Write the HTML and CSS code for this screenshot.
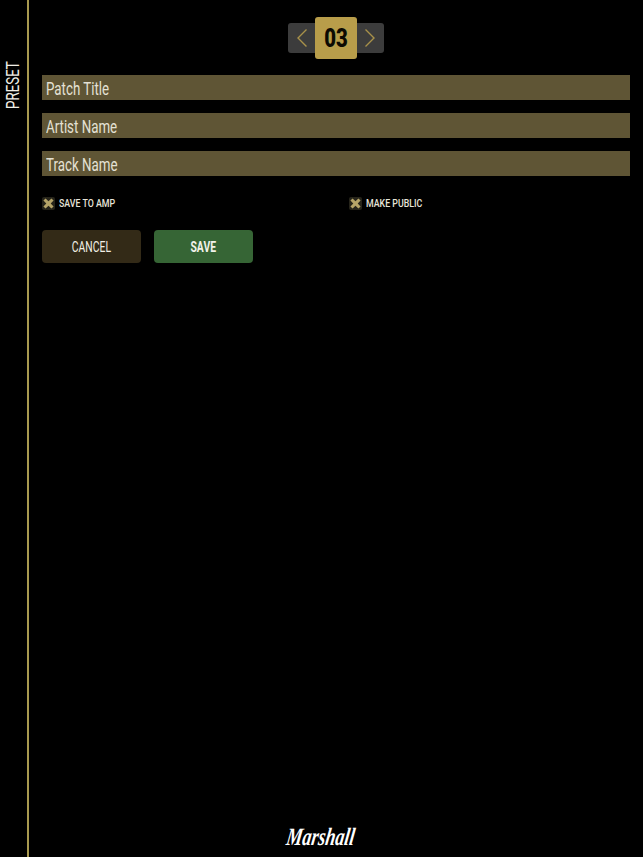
FILE: index.html
```html
<!DOCTYPE html>
<html>
  <head>
    <title>Preset</title>
    <meta name="viewport" content="width=device-width, initial-scale=1.0" />
    <link rel="stylesheet" href="styles.css">
  </head>
  <body>
    <div class="container">
      <!-- Side tab -->
      <div class="side-tab">
        <span class="side-tab-label">PRESET</span>
      </div>

      <div class="screen">
        <!-- Preset number -->
        <div class="stepper">
          <button class="step-button">
            <svg width="12" height="20" viewBox="0 0 12 20" fill="none" xmlns="http://www.w3.org/2000/svg">
              <path d="M10.5 1.5L2 10L10.5 18.5" stroke="#a8914a" stroke-width="1.4" />
            </svg>
          </button>
          <div class="step-value"><span class="step-number">03</span></div>
          <button class="step-button step-next">
            <svg width="12" height="20" viewBox="0 0 12 20" fill="none" xmlns="http://www.w3.org/2000/svg">
              <path d="M1.5 1.5L10 10L1.5 18.5" stroke="#a8914a" stroke-width="1.4" />
            </svg>
          </button>
        </div>

        <div class="field"><span class="field-text">Patch Title</span></div>
        <div class="field"><span class="field-text">Artist Name</span></div>
        <div class="field"><span class="field-text">Track Name</span></div>

        <div class="options">
          <div class="option">
            <span class="check">
              <svg width="11" height="11" viewBox="0 0 11 11" xmlns="http://www.w3.org/2000/svg">
                <path d="M2.6 0.4L5.5 3.3L8.4 0.4L10.6 2.6L7.7 5.5L10.6 8.4L8.4 10.6L5.5 7.7L2.6 10.6L0.4 8.4L3.3 5.5L0.4 2.6Z" fill="#b5a468" />
              </svg>
            </span>
            <span class="option-label">SAVE TO AMP</span>
          </div>
          <div class="option">
            <span class="check">
              <svg width="11" height="11" viewBox="0 0 11 11" xmlns="http://www.w3.org/2000/svg">
                <path d="M2.6 0.4L5.5 3.3L8.4 0.4L10.6 2.6L7.7 5.5L10.6 8.4L8.4 10.6L5.5 7.7L2.6 10.6L0.4 8.4L3.3 5.5L0.4 2.6Z" fill="#b5a468" />
              </svg>
            </span>
            <span class="option-label">MAKE PUBLIC</span>
          </div>
        </div>

        <div class="actions">
          <button class="button cancel-button"><span class="button-text">CANCEL</span></button>
          <button class="button save-button"><span class="button-text">SAVE</span></button>
        </div>

        <div class="footer">
          <span class="logo">Marshall</span>
        </div>
      </div>
    </div>
  </body>
</html>
```

FILE: styles.css
```css
body {
  margin: 0;
  background-color: #000;
  color: #e4e0d2;
  font-family: Roboto, "Liberation Sans", sans-serif;
  font-size: 14px;
}
button {
  font-family: inherit;
  border: none;
  padding: 0;
}
.container {
  display: flex;
  width: 643px;
  height: 857px;
  overflow: hidden;
}
.side-tab {
  width: 27px;
  border-right: 2px solid #a8994f;
  padding-top: 51px;
  flex-shrink: 0;
  box-sizing: content-box;
}
.side-tab-label {
  display: block;
  width: 26px;
  writing-mode: vertical-rl;
  transform: rotate(180deg) scaleY(0.7);
  font-size: 19px;
  line-height: 26px;
  white-space: nowrap;
  color: #f0eee6;
}
.screen {
  flex: 1;
  min-width: 0;
  display: flex;
  flex-direction: column;
  padding: 17px 13px 0 13px;
  box-sizing: border-box;
}
.stepper {
  display: flex;
  align-items: center;
  justify-content: center;
  margin-bottom: 16px;
}
.step-button {
  width: 27px;
  height: 30px;
  background-color: #3c3c3c;
  display: flex;
  align-items: center;
  justify-content: center;
}
.step-button:first-child {
  border-radius: 3px 0 0 3px;
}
.step-next {
  padding-right: 2px;
  border-radius: 0 3px 3px 0;
}
.step-value {
  width: 42px;
  height: 42px;
  background-color: #b89d4a;
  border-radius: 3px;
  display: flex;
  align-items: center;
  justify-content: center;
}
.step-number {
  display: inline-block;
  color: #0c0a02;
  font-size: 26px;
  font-weight: 900;
  transform: scaleX(0.78);
}
.field {
  height: 25px;
  line-height: 27px;
  background-color: #5f5535;
  padding-left: 4px;
  margin-bottom: 13px;
  white-space: nowrap;
}
.field-text {
  display: inline-block;
  font-size: 18px;
  transform: scaleX(0.74);
  transform-origin: left center;
  color: #e4e1d4;
}
.options {
  display: flex;
  margin-top: 1px;
  height: 27px;
  align-items: center;
}
.option {
  display: flex;
  align-items: center;
  flex: none;
  width: 306.5px;
}
.check {
  width: 13px;
  height: 13px;
  background-color: #26241a;
  border-radius: 2px;
  display: flex;
  align-items: center;
  justify-content: center;
  margin-right: 4px;
}
.option-label {
  display: inline-block;
  font-size: 11px;
  font-weight: 500;
  white-space: nowrap;
  transform: scaleX(0.8);
  transform-origin: left center;
  color: #e8e5da;
}
.actions {
  display: flex;
  gap: 13px;
  margin-top: 13px;
}
.button {
  width: 99px;
  height: 33px;
  border-radius: 4px;
  font-size: 14px;
  font-weight: 400;
  color: #f2efe6;
}
.button-text {
  display: inline-block;
  transform: scaleX(0.74);
}
.cancel-button {
  background-color: #332a17;
}
.save-button {
  background-color: #366535;
  font-weight: 700;
  color: #f2f2ea;
}
.footer {
  margin-top: auto;
  height: 34px;
  display: flex;
  justify-content: center;
  margin-left: -31px;
}
.logo {
  display: inline-block;
  font-family: "Liberation Serif", serif;
  font-style: italic;
  font-weight: 700;
  font-size: 25px;
  line-height: 28px;
  color: #fff;
  transform: scaleX(0.72) skewX(-12deg);
}
```
